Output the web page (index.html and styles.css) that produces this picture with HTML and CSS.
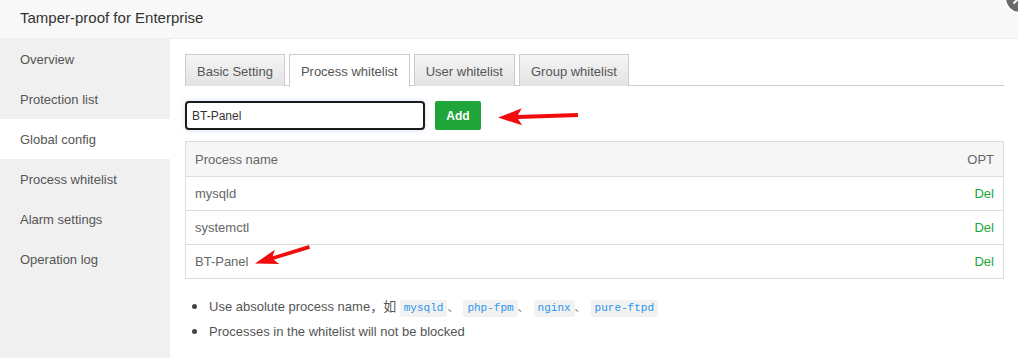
FILE: index.html
```html
<!DOCTYPE html>
<html>
<head>
<meta charset="utf-8">
<link rel="stylesheet" href="styles.css">
</head>
<body>
<div class="layer">
  <div class="layer-title">Tamper-proof for Enterprise</div>
  <span class="layer-close"></span>
  <div class="layer-body">
    <ul class="side-menu">
      <li>Overview</li>
      <li>Protection list</li>
      <li class="active">Global config</li>
      <li>Process whitelist</li>
      <li>Alarm settings</li>
      <li>Operation log</li>
    </ul>
    <div class="main">
      <div class="tabs">
        <span class="tab">Basic Setting</span>
        <span class="tab on">Process whitelist</span>
        <span class="tab">User whitelist</span>
        <span class="tab">Group whitelist</span>
      </div>
      <div class="add-row">
        <input class="proc-input" type="text" value="BT-Panel">
        <button class="btn-add">Add</button>
      </div>
      <table class="grid">
        <thead>
          <tr><th>Process name</th><th class="opt">OPT</th></tr>
        </thead>
        <tbody>
          <tr><td>mysqld</td><td class="opt"><a class="del">Del</a></td></tr>
          <tr><td>systemctl</td><td class="opt"><a class="del">Del</a></td></tr>
          <tr><td>BT-Panel</td><td class="opt"><a class="del">Del</a></td></tr>
        </tbody>
      </table>
      <ul class="tips">
        <li>Use absolute process name，如 <code>mysqld</code><span class="sep">、</span><code>php-fpm</code><span class="sep">、</span><code>nginx</code><span class="sep">、</span><code>pure-ftpd</code></li>
        <li>Processes in the whitelist will not be blocked</li>
      </ul>
    </div>
  </div>
  <svg class="arrows" width="1018" height="358" viewBox="0 0 1018 358">
    <g transform="translate(498 117.5) rotate(-1.5)">
      <polygon points="0,0 24,-8.5 20,-2 80,-2.4 80,1.6 20,2 24,8.5" fill="#f10d0d"/>
    </g>
    <g transform="translate(255 263.5) rotate(-16.7)">
      <polygon points="0,0 23,-7.5 19,-1.8 57,-2.2 57,1.6 19,1.8 23,7.5" fill="#f10d0d"/>
    </g>
  </svg>
</div>
</body>
</html>
```
FILE: styles.css
```css
* { box-sizing: border-box; }
html, body { margin: 0; padding: 0; background: #fff; }
body {
  font-family: "Liberation Sans", "Noto Sans CJK SC", sans-serif;
  color: #555;
  overflow: hidden;
}
.layer {
  position: relative;
  width: 1018px;
  height: 358px;
  overflow: hidden;
}
.layer-title {
  height: 39px;
  line-height: 36px;
  padding-left: 20px;
  font-size: 15px;
  color: #333;
  background: #f8f8f8;
  border-bottom: 1px solid #eee;
}
.layer-close {
  position: absolute;
  right: -18px;
  top: -18px;
  width: 32px;
  height: 32px;
  border-radius: 50%;
  background: #6a6a6a;
  border: 2px solid #fff;
}
.layer-close::before {
  content: "";
  position: absolute;
  left: 6px;
  top: 15px;
  width: 10px;
  height: 2px;
  background: #fff;
  transform: rotate(-45deg);
}
.layer-body {
  display: flex;
  height: 319px;
}
.side-menu {
  list-style: none;
  margin: 0;
  padding: 0;
  width: 170px;
  flex: none;
  background: #f0f0f0;
}
.side-menu li {
  height: 40px;
  line-height: 41px;
  padding-left: 20px;
  font-size: 13px;
  color: #555;
}
.side-menu li.active { background: #fff; }
.main {
  flex: 1;
  padding: 15px 14px 0 15px;
}
.tabs {
  display: flex;
  gap: 4px;
  height: 32px;
  border-bottom: 1px solid #cdc9d6;
}
.tab {
  height: 32px;
  line-height: 33px;
  padding: 0 11px;
  font-size: 13px;
  color: #555;
  border: 1px solid #cdc9d6;
  border-bottom: none;
  background: linear-gradient(#f5f5f5, #e3e3e3);
}
.tab.on {
  background: #fff;
  height: 33px;
  border-bottom: 1px solid #fff;
}
.add-row {
  display: flex;
  gap: 10px;
  margin-top: 15px;
  height: 29px;
}
.proc-input {
  width: 240px;
  height: 29px;
  border: 2px solid #1b1b1b;
  border-radius: 4px;
  padding: 0 5px;
  font-family: inherit;
  font-size: 12px;
  color: #333;
  box-shadow: 0 0 5px rgba(120, 170, 230, 0.35);
  outline: none;
}
.btn-add {
  width: 46px;
  height: 29px;
  border: none;
  border-radius: 2px;
  background: #20a53a;
  color: #fff;
  font-family: inherit;
  font-weight: bold;
  font-size: 12px;
  padding: 0;
}
.grid {
  width: 100%;
  margin-top: 11px;
  border-collapse: collapse;
  font-size: 13px;
  color: #666;
}
.grid th, .grid td {
  border-top: 1px solid #ddd;
  border-bottom: 1px solid #ddd;
  text-align: left;
  padding: 0 9px;
  font-weight: normal;
}
.grid th:first-child, .grid td:first-child { border-left: 1px solid #ddd; }
.grid th:last-child, .grid td:last-child { border-right: 1px solid #ddd; }
.grid th {
  height: 35px;
  background: #f6f6f6;
  color: #666;
}
.grid td { height: 34px; }
.grid .opt { text-align: right; }
.del { color: #20a53a; }
.tips {
  list-style: none;
  margin: 15px 0 0 0;
  padding: 0 0 0 24px;
  font-size: 13px;
  color: #555;
}
.tips li {
  position: relative;
  height: 25px;
  line-height: 25px;
}
.tips li::before {
  content: "";
  position: absolute;
  left: -17px;
  top: 10px;
  width: 5px;
  height: 5px;
  border-radius: 50%;
  background: #444;
}
.tips code {
  font-family: "Liberation Mono", monospace;
  font-size: 11px;
  color: #2a95ee;
  background: #f2f2f2;
  border-radius: 3px;
  padding: 2px 4px 3px;
}
.sep {
  display: inline-block;
  width: 16px;
  color: #777;
  font-size: 11px;
}
.arrows {
  position: absolute;
  left: 0;
  top: 0;
  pointer-events: none;
}
```
